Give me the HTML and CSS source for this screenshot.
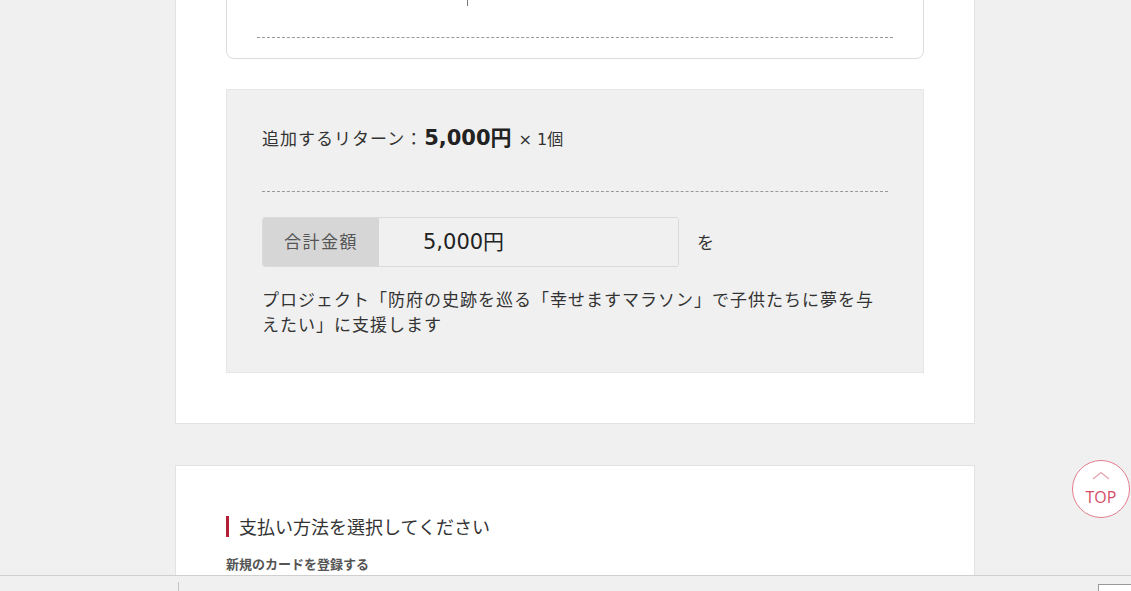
FILE: index.html
```html
<!DOCTYPE html>
<html lang="ja">
<head>
<meta charset="utf-8">
<title>支援内容の確認</title>
<link rel="stylesheet" href="styles.css">
</head>
<body>
<div class="page">
  <section class="panel panel-first">
    <div class="card">
      <div class="card-row"><div class="card-cell"></div></div>
      <div class="card-rule"></div>
    </div>
    <div class="summary">
      <p class="add-line"><span class="add-label">追加するリターン：</span><strong class="add-price">5,000円</strong><span class="add-qty">× 1個</span></p>
      <div class="summary-rule"></div>
      <div class="total-row">
        <div class="total-box">
          <span class="total-label">合計金額</span>
          <span class="total-value">5,000円</span>
        </div>
        <span class="total-suffix">を</span>
      </div>
      <p class="support-text">プロジェクト「防府の史跡を巡る「幸せますマラソン」で子供たちに夢を与えたい」に支援します</p>
    </div>
  </section>
  <section class="panel panel-second">
    <h2 class="section-title">支払い方法を選択してください</h2>
    <p class="sub-title">新規のカードを登録する</p>
  </section>
</div>
<a class="to-top" href="#">
  <svg class="to-top-icon" width="18" height="9" viewBox="0 0 18 9"><path d="M1 8 L9 1.5 L17 8" fill="none" stroke="#e6a0aa" stroke-width="1.1"/></svg>
  <span class="to-top-text">TOP</span>
</a>
<div class="bottom-bar">
  <span class="bottom-divider"></span>
  <span class="bottom-box"></span>
</div>
</body>
</html>
```

FILE: styles.css
```css
html, body {
  margin: 0;
  padding: 0;
}
body {
  background: #f0f0f0;
  font-family: "DejaVu Sans", "Noto Sans CJK JP", sans-serif;
  color: #333;
  overflow: hidden;
  height: 591px;
}
.page {
  width: 800px;
  margin-left: 175px;
  margin-top: -60px;
}
.panel {
  background: #fff;
  border: 1px solid #e2e2e2;
  box-sizing: border-box;
}
.panel-first {
  padding: 50px 50px 50px 50px;
}
.card {
  border: 1px solid #dcdcdc;
  border-radius: 8px;
  padding: 0 30px 20px;
}
.card-row {
  height: 14px;
}
.card-cell {
  width: 210px;
  height: 14px;
  border-right: 1px solid #777;
}
.card-rule {
  margin-top: 31px;
  border-top: 1px dashed #999;
}
.summary {
  margin-top: 30px;
  background: #f0f0f0;
  border: 1px solid #e6e6e6;
  padding: 35px 35px 36px;
}
.add-line {
  margin: 0;
  height: 26px;
  line-height: 26px;
  font-size: 17px;
  color: #333;
}
.add-label {
  font-family: "Noto Sans CJK JP", sans-serif;
  letter-spacing: 1px;
}
.add-price {
  font-family: "DejaVu Sans", "Noto Sans CJK JP", sans-serif;
  font-weight: bold;
  font-size: 21px;
  color: #222;
  margin-left: 1px;
}
.add-qty {
  font-size: 16px;
  margin-left: 7px;
  color: #333;
}
.summary-rule {
  margin-top: 40px;
  border-top: 1px dashed #999;
}
.total-row {
  margin-top: 25px;
  display: flex;
  align-items: center;
}
.total-box {
  display: flex;
  width: 417px;
  height: 50px;
  box-sizing: border-box;
  border: 1px solid #dadada;
  border-radius: 3px;
  overflow: hidden;
}
.total-label {
  width: 116px;
  background: #d6d6d6;
  color: #555;
  font-family: "Noto Sans CJK JP", sans-serif;
  font-size: 17px;
  letter-spacing: 1.5px;
  padding-bottom: 3px;
  display: flex;
  align-items: center;
  justify-content: center;
}
.total-value {
  flex: 1;
  padding-left: 44px;
  padding-bottom: 4px;
  display: flex;
  align-items: center;
  font-size: 21px;
  color: #222;
  background: #f0f0f0;
}
.total-suffix {
  margin-left: 18px;
  font-family: "Noto Sans CJK JP", sans-serif;
  font-size: 17px;
  color: #333;
  padding-bottom: 2px;
}
.support-text {
  margin: 19px 0 0;
  font-family: "Noto Sans CJK JP", sans-serif;
  font-size: 17px;
  letter-spacing: 1px;
  line-height: 25px;
  color: #333;
}
.panel-second {
  margin-top: 41px;
  padding: 50px 50px 60px;
  height: 200px;
}
.section-title {
  margin: 0;
  border-left: 3px solid #b51f36;
  padding-left: 10px;
  font-family: "Noto Sans CJK JP", sans-serif;
  font-weight: normal;
  font-size: 18px;
  line-height: 21px;
  color: #333;
}
.sub-title {
  margin: 17px 0 0;
  font-family: "Noto Sans CJK JP", sans-serif;
  font-weight: bold;
  font-size: 13px;
  line-height: 20px;
  color: #555;
}
.to-top {
  position: fixed;
  left: 1072px;
  top: 460px;
  width: 58px;
  height: 58px;
  box-sizing: border-box;
  border: 1px solid #e27c8c;
  border-radius: 50%;
  background: #fff;
  text-decoration: none;
  display: flex;
  flex-direction: column;
  align-items: center;
  padding-top: 10px;
}
.to-top-icon {
  display: block;
}
.to-top-text {
  font-family: "Open Sans", sans-serif;
  font-size: 16px;
  line-height: 20px;
  margin-top: 7px;
  color: #d64c68;
}
.bottom-bar {
  position: fixed;
  left: 0;
  right: 0;
  bottom: 0;
  height: 15px;
  background: #f0f0f0;
  border-top: 1px solid #cfcfcf;
}
.bottom-divider {
  position: absolute;
  left: 178px;
  top: 6px;
  height: 10px;
  border-left: 1px solid #c4c4c4;
}
.bottom-box {
  position: absolute;
  left: 1098px;
  top: 8px;
  width: 40px;
  height: 10px;
  background: #fff;
  border: 1px solid #999;
}
```
